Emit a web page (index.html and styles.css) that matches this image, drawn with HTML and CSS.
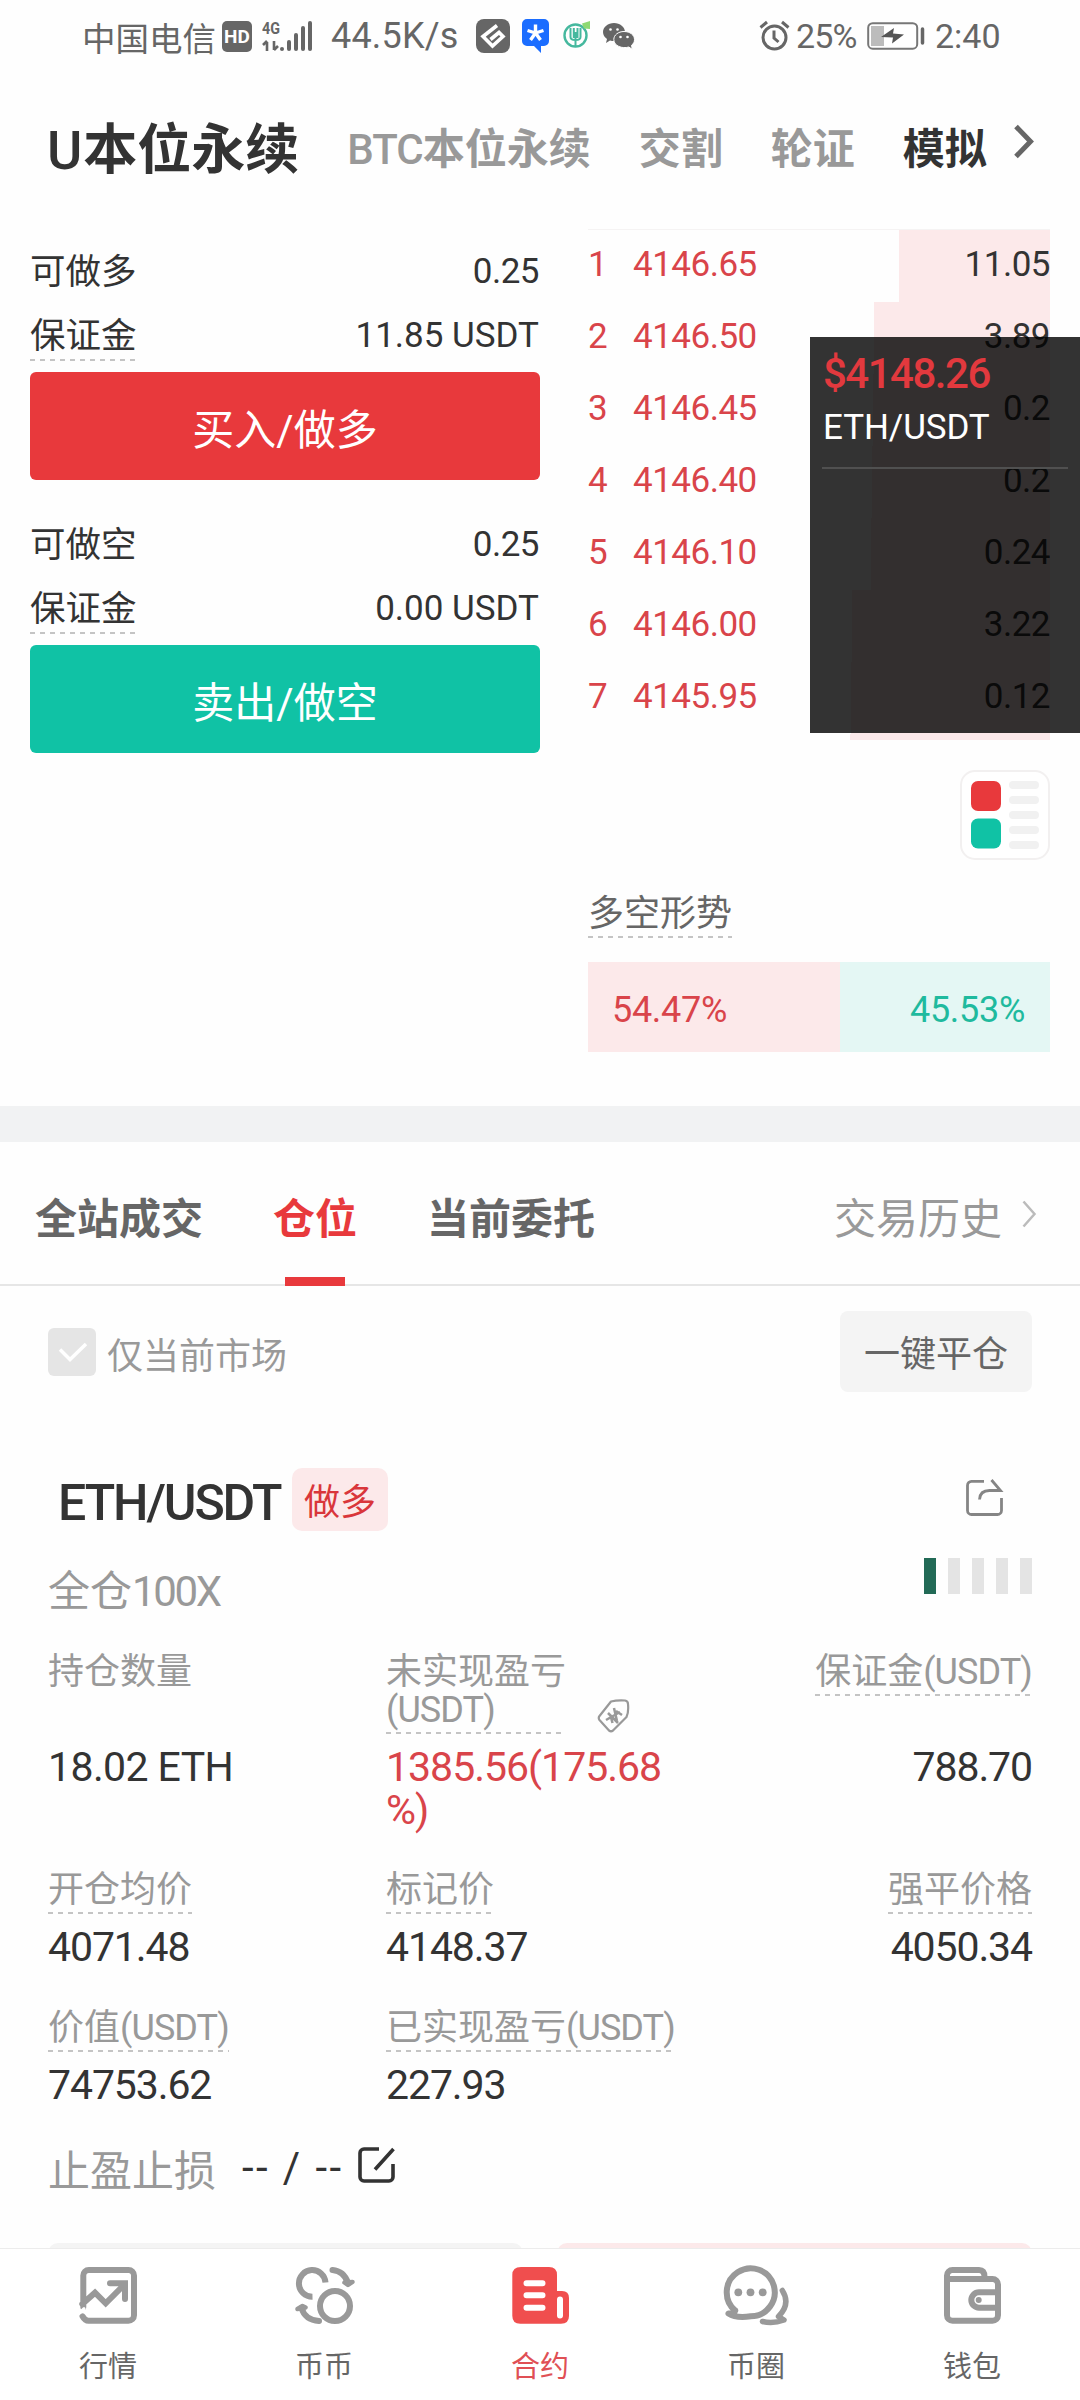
FILE: index.html
```html
<!DOCTYPE html>
<html lang="zh-CN">
<head>
<meta charset="utf-8">
<title>合约</title>
<link rel="stylesheet" href="styles.css">
</head>
<body>
<div class="app">
  <header class="status">
    <span class="carrier">中国电信</span>
    <span class="hd">HD</span>
    <svg class="signal" width="52" height="34" viewBox="0 0 52 34" fill="#666">
      <text x="0" y="15" class="net" textLength="18" lengthAdjust="spacingAndGlyphs">4G</text>
      <path d="M5 32V23M5 22L1 26M12 22v9M12 31l4-4" stroke="#666" stroke-width="2.6" fill="none"/>
      <rect x="18" y="28" width="4" height="4" rx="2"/><rect x="25" y="21" width="4" height="11" rx="2"/>
      <rect x="32" y="14" width="4" height="18" rx="2"/><rect x="39" y="7" width="4" height="25" rx="2"/><rect x="46" y="2" width="4" height="30" rx="2"/>
    </svg>
    <span class="speed">44.5K/s</span>
    <svg class="app-a" width="34" height="34" viewBox="0 0 34 34"><rect width="34" height="34" rx="8" fill="#666"/><path d="M21 6.500L7 17.500 16.500 27 27 17.500 23 13.500 14.500 20.500" fill="none" stroke="#fff" stroke-width="3.600"/></svg>
    <svg class="app-b" width="27" height="34" viewBox="0 0 27 34"><path d="M5 0h17a5 5 0 0 1 5 5v17a5 5 0 0 1-5 5h-3v7l-7-7H5a5 5 0 0 1-5-5V5a5 5 0 0 1 5-5z" fill="#1b6dff"/><path d="M13.500 5.500v8.500M13.500 14L5.500 11.500M13.500 14l8-2.500M13.500 14l-5 7M13.500 14l5 7" stroke="#fff" stroke-width="3.400"/></svg>
    <svg class="app-c" width="28" height="28" viewBox="0 0 28 28" fill="none"><circle cx="12.500" cy="15.500" r="11" stroke="#45b89e" stroke-width="2.400"/><path d="M12.500 12v14M7.500 8v9q0 3 5 3t5-3V8M10.800 8v10M14.500 8v10" stroke="#45b89e" stroke-width="2"/><path d="M19 3.500L27 1v8l-6-.5z" fill="#8ed973"/></svg>
    <svg class="app-d" width="32" height="27" viewBox="0 0 32 27"><path d="M11 0c6 0 11 4 11 9s-5 9-11 9c-1.500 0-2.500 0-4-.6L3 20l1-4C1.500 14.300 0 12 0 9c0-5 5-9 11-9z" fill="#666"/><path d="M21 8.500c6 0 10.500 3.500 10.500 8 0 2.500-1 4.300-3 5.800l.8 4-3.500-2.300c-6.500 2-15-1-15-7.500 0-4.500 4.500-8 10.200-8z" fill="#666" stroke="#fff"/><g fill="#fff"><circle cx="7.500" cy="6.500" r="1.300"/><circle cx="14.500" cy="6.500" r="1.300"/><circle cx="17.500" cy="14" r="1.300"/><circle cx="24.500" cy="14" r="1.300"/></g></svg>
    <svg class="alarm" width="31" height="32" viewBox="0 0 31 32" fill="none" stroke="#666" stroke-width="3"><circle cx="15.500" cy="17.500" r="11.500"/><path d="M1.500 7.500L8 2M29.500 7.500L23 2M15 10.500V18l4.500 4"/></svg>
    <span class="percent">25%</span>
    <svg class="battery" width="58" height="28" viewBox="0 0 58 28"><rect x="1.200" y="1.200" width="49" height="25.500" rx="4.500" fill="#fff" stroke="#777" stroke-width="2"/><rect x="4" y="4" width="13" height="20" fill="#bcbcbc"/><path d="M14 15l13-9-1 5.500 11 1-12 9 1-6z" fill="#555"/><path d="M55.500 7v14" stroke="#666" stroke-width="3.500" stroke-linecap="round"/></svg>
    <span class="clock">2:40</span>
  </header>

  <nav class="markets">
    <span class="market current"><i>U</i>本位永续</span>
    <span class="market"><i>BTC</i>本位永续</span>
    <span class="market">交割</span>
    <span class="market">轮证</span>
    <span class="market dark">模拟</span>
    <svg class="more" width="22" height="36" viewBox="0 0 22 36"><path d="M3 2.500L17.500 17.500 3 32.500" fill="none" stroke="#666" stroke-width="5"/></svg>
  </nav>

  <section class="trade">
    <div class="order">
      <div class="pair"><span>可做多</span><b>0.25</b></div>
      <div class="pair"><span class="dashed">保证金</span><b class="coin">11.85 USDT</b></div>
      <button class="action buy">买入/做多</button>
      <div class="pair second"><span>可做空</span><b>0.25</b></div>
      <div class="pair"><span class="dashed">保证金</span><b class="coin">0.00 USDT</b></div>
      <button class="action sell">卖出/做空</button>
    </div>
    <div class="depth">
      <div class="book">
        <div class="level"><span>1</span><span>4146.65</span><em style="width:151px">11.05</em></div>
        <div class="level"><span>2</span><span>4146.50</span><em style="width:176px">3.89</em></div>
        <div class="level"><span>3</span><span>4146.45</span><em style="width:177px">0.2</em></div>
        <div class="level"><span>4</span><span>4146.40</span><em style="width:178px">0.2</em></div>
        <div class="level"><span>5</span><span>4146.10</span><em style="width:179px">0.24</em></div>
        <div class="level"><span>6</span><span>4146.00</span><em style="width:198px">3.22</em></div>
        <div class="level"><span>7</span><span>4145.95</span><em style="width:199px">0.12</em></div>
        <div class="level"><em style="width:200px"></em></div>
      </div>
      <svg class="toggle" width="90" height="90" viewBox="0 0 90 90"><rect x="1" y="1" width="88" height="88" rx="14" fill="#fff" stroke="#f2f0f0" stroke-width="2"/><rect x="11" y="11" width="30" height="30" rx="7" fill="#e8393c"/><rect x="11" y="48.500" width="30" height="30" rx="7" fill="#10c2a5"/><path d="M53 15h22M53 30h22M53 45h22M53 60h22M53 75h22" stroke="#f1f1f1" stroke-width="8" stroke-linecap="round"/></svg>
      <div class="trend dashed">多空形势</div>
      <div class="ratio"><span class="long" style="width:54.47%">54.47%</span><span class="short">45.53%</span></div>
    </div>
  </section>

  <div class="band"></div>

  <nav class="tabs">
    <span>全站成交</span>
    <span class="active">仓位</span>
    <span>当前委托</span>
    <span class="history">交易历史</span>
    <svg width="15" height="28" viewBox="0 0 15 28"><path d="M1.500 1.500L12.500 14 1.500 26.500" fill="none" stroke="#bbb" stroke-width="2.500"/></svg>
  </nav>

  <section class="positions">
    <div class="filter">
      <svg width="48" height="48" viewBox="0 0 48 48"><rect width="48" height="48" rx="6" fill="#e5e5e5"/><path d="M12 21.500l10 10L38 16" fill="none" stroke="#fff" stroke-width="3.500"/></svg>
      <span>仅当前市场</span>
      <button>一键平仓</button>
    </div>
    <div class="head">
      <h2>ETH/USDT</h2><span class="side">做多</span>
      <svg width="38" height="40" viewBox="0 0 38 40" fill="none" stroke="#858585" stroke-width="2.800"><path d="M18 4.400H5.500a4 4 0 0 0-4 4V33.500a4 4 0 0 0 4 4H31.500a4 4 0 0 0 4-4V21M25.500 3l9 10.500H23.500q-9.500 0-10 9"/></svg>
    </div>
    <div class="leverage"><span>全仓<i>100X</i></span><div class="risk"><i></i><i></i><i></i><i></i><i></i></div></div>

    <div class="stats first">
      <div><label>持仓数量</label><b class="coin">18.02 ETH</b></div>
      <div><label><span class="two dashed">未实现盈亏<br><i>(USDT)</i></span>
        <svg class="tag" width="34" height="36" viewBox="0 0 34 36" fill="none" stroke="#999" stroke-width="2.200" stroke-linejoin="round"><path d="M14 3.500Q20 2 28 2.500 31 3 31 6q.8 8-1.500 13L16 32.500q-2 1.500-4 0L2.500 22q-1.500-2 0-4z"/><path d="M9 22l14-8M11 15l10 10M17 10l3 13M13.500 17.500l2 7.500M19 13l6 4" stroke-width="2.500"/></svg></label><b class="red">1385.56(175.68<br>%)</b></div>
      <div><label><span class="dashed">保证金<i>(USDT)</i></span></label><b>788.70</b></div>
    </div>
    <div class="stats">
      <div><label><span class="dashed">开仓均价</span></label><b>4071.48</b></div>
      <div><label><span class="dashed">标记价</span></label><b>4148.37</b></div>
      <div><label><span class="dashed">强平价格</span></label><b>4050.34</b></div>
    </div>
    <div class="stats">
      <div><label><span class="dashed">价值<i>(USDT)</i></span></label><b>74753.62</b></div>
      <div><label><span class="dashed">已实现盈亏<i>(USDT)</i></span></label><b>227.93</b></div>
    </div>
    <div class="stop"><span>止盈止损</span><b>-- / --</b>
      <svg width="38" height="38" viewBox="0 0 38 38" fill="none" stroke="#333" stroke-width="3.600"><path d="M21 3H6a4 4 0 0 0-4 4V31a4 4 0 0 0 4 4H31a4 4 0 0 0 4-4V18M17 23.500L35.500 3"/></svg>
    </div>
    <div class="peek"><span></span><span></span></div>
  </section>

  <nav class="bottom">
    <a><svg viewBox="0 0 66 66"><path d="M8.300 45V13.500A5.500 5.500 0 0 1 13.800 8H53.500A5.500 5.500 0 0 1 59 13.500V53.300a5.500 5.500 0 0 1-5.500 5.500H13.500q-3.500 0-6-4.500M7.300 42L20 30.700l10.700 10.600L49 23M35 21.300H50V37" stroke-linejoin="miter"/><path d="M4 51.500l5-5" stroke="#fff" stroke-width="3"/></svg>行情</a>
    <a><svg viewBox="0 0 66 66"><path d="M34.500 20.500A13.300 13.300 0 1 0 21.500 34.700" stroke-linecap="butt"/><circle cx="44" cy="44" r="15"/><path d="M41.500 8Q53 9 57 21M28 59Q14 58 10.500 46"/><path d="M53.500 20.500l8-.5-4.500 3zM14.500 45.500L6.500 47l5-3z" stroke-width="4.500"/></svg>币币</a>
    <a class="on"><svg viewBox="0 0 66 66"><path d="M14 5H42q8 0 8 8V29h5q7 0 7 7V54q0 7.700-8 7.700H13.300q-8 0-8-8V13q0-8 8.700-8z" fill="#f04e4e" stroke="none"/><path d="M19.500 21.300h16M19.500 33.300h16M19.500 45.700h16M53 37.500v16" stroke="#fff"/></svg>合约</a>
    <a><svg viewBox="0 0 66 66" overflow="visible"><path d="M12.200 48.600A24 24 0 1 1 27.700 54.300Q13 56.500 5.500 51.500q6.500-.5 6.700-3"/><path d="M59.300 28.500Q68 42 55.500 54.500l5.500 3.500Q50 62 39.500 59.500" stroke-width="5.500"/><g fill="#999" stroke="none"><circle cx="15.300" cy="30.300" r="3.900"/><circle cx="27.500" cy="30.300" r="3.900"/><circle cx="39.700" cy="30.300" r="3.900"/></g></svg>币圈</a>
    <a><svg viewBox="0 0 66 66"><path d="M8 17V53.300a5.500 5.500 0 0 0 5.500 5.500H53.500a5.500 5.500 0 0 0 5.500-5.500V22.500A5.500 5.500 0 0 0 53.500 17H8V13.500A5.500 5.500 0 0 1 13.500 8H40q5.500 0 5.500 7M59 30.300H40a7.700 7.700 0 0 0 0 15.400H59"/><circle cx="39.700" cy="38" r="3" fill="#999" stroke="none"/></svg>钱包</a>
  </nav>

  <aside class="ticker"><strong>$4148.26</strong><span>ETH/USDT</span></aside>
</div>
</body>
</html>
```
FILE: styles.css
```css
* { box-sizing: border-box; }
body { margin: 0; background: #fff; }
i, em { font-style: normal; }
b { font-weight: 400; }
button { border: 0; padding: 0; font: inherit; }

.app {
  position: relative;
  width: 1080px;
  height: 2400px;
  overflow: hidden;
  display: flex;
  flex-direction: column;
  background: #fefefe;
  color: #333;
  font-family: Roboto, "Noto Sans CJK SC", sans-serif;
  font-size: 35px;
}

.dashed {
  background-image: linear-gradient(90deg, #c4c4c4 50%, transparent 50%);
  background-size: 10px 2px;
  background-repeat: repeat-x;
  background-position: 0 100%;
}

/* Status bar */
.status {
  height: 72px;
  padding: 0 0 0 82px;
  display: flex;
  align-items: center;
  color: #666;
  font-size: 33.500px;
  white-space: nowrap;
}
.carrier { width: 140px; }
.hd {
  width: 30px;
  height: 31px;
  border-radius: 5px;
  background: #666;
  color: #fff;
  font-size: 19px;
  font-weight: 700;
  line-height: 31px;
  text-align: center;
}
.signal { margin-left: 10px; }
.net { font-size: 17px; font-weight: 700; }
.speed { margin-left: 17px; width: 145px; font-size: 36px; letter-spacing: .2px; }
.app-b { margin-left: 12px; }
.app-c { margin: -4px 0 0 14px; }
.app-d { margin-left: 12px; }
.alarm { margin-left: 124px; }
.percent { margin-left: 6px; width: 71px; font-size: 34px; letter-spacing: -.8px; }
.clock { margin-left: 10px; font-size: 34px; }

/* Market selector */
.markets {
  height: 146px;
  padding-left: 47px;
  display: flex;
  align-items: center;
  color: #999;
  font-size: 42px;
  font-weight: 700;
  white-space: nowrap;
}
.market { margin-right: 48px; }
.market i { font-weight: 500; letter-spacing: -1px; }
.current { color: #333; font-size: 54px; margin-right: 48px; }
.current i { letter-spacing: 1px; }
.dark { color: #333; margin-right: 26px; }
.more { margin-top: -6px; }

/* Order entry and depth */
.trade {
  height: 888px;
  padding: 4px 30px 0;
  display: flex;
  justify-content: space-between;
}
.order { width: 510px; padding-top: 17px; }
.pair {
  height: 64px;
  display: flex;
  justify-content: space-between;
  line-height: 67px;
  padding-right: 1px;
}
.pair span { font-size: 35.500px; }
.pair .dashed { background-position: 0 56px; }
.pair b { line-height: 65px; letter-spacing: -.5px; }
.pair .coin { letter-spacing: 0; }
.second { margin-top: 32px; }
.action {
  display: block;
  width: 100%;
  height: 108px;
  margin-top: 5px;
  border-radius: 6px;
  color: #fff;
  font-size: 42px;
  line-height: 117px;
}
.buy { background: #e8393c; }
.sell { background: #10c2a5; }

.depth { width: 462px; padding-top: 7px; display: flex; flex-direction: column; }
.book { height: 511px; border-top: 1px solid #f5f3f3; overflow: hidden; flex: none; }
.level {
  height: 72px;
  display: flex;
  color: #d9444a;
  line-height: 69px;
  letter-spacing: -.5px;
}
.level span:first-child { width: 45px; }
.level em { margin-left: auto; background: #fce9ea; color: #333; text-align: right; }
.toggle { margin: 30px 0 0 auto; display: block; flex: none; }
.trend {
  align-self: flex-start;
  margin-top: 28px;
  height: 50px;
  color: #666;
  font-size: 36px;
  line-height: 52px;
}
.ratio {
  height: 90px;
  margin-top: 24px;
  display: flex;
  font-size: 36px;
  line-height: 96px;
  letter-spacing: -.3px;
}
.long { padding-left: 24px; background: #fce9ea; color: #d9444a; }
.short { flex: 1; padding-right: 25px; background: #e4f7f4; color: #1fba9e; text-align: right; }

.band { height: 36px; background: #f1f2f3; }

/* Record tabs */
.tabs {
  height: 144px;
  padding-left: 35px;
  border-bottom: 2px solid #e6e6e6;
  display: flex;
  align-items: flex-start;
  color: #666;
  font-size: 42px;
  font-weight: 700;
  line-height: 144px;
}
.tabs span { margin-right: 70px; padding-top: 6px; height: 144px; }
.tabs .active { position: relative; color: #e8393c; }
.active::after {
  content: "";
  position: absolute;
  left: 12px;
  bottom: 0;
  width: 60px;
  height: 9px;
  background: #e8393c;
}
.tabs .history { margin: 0 20px 0 auto; color: #999; font-weight: 400; }
.tabs svg { margin: 58px 43px 0 0; }

/* Position card */
.positions { height: 962px; padding: 25px 48px 0; position: relative; }
.filter {
  height: 81px;
  display: flex;
  align-items: center;
  color: #999;
  font-size: 36px;
}
.filter span { margin-left: 11px; padding-top: 2px; }
.filter button {
  width: 192px;
  height: 81px;
  margin-left: auto;
  border-radius: 8px;
  background: #f4f4f4;
  color: #666;
  line-height: 89px;
}
.head { height: 63px; margin-top: 76px; display: flex; align-items: center; }
.head h2 { margin: 0; width: 244px; padding-left: 10px; font-size: 50px; font-weight: 500; letter-spacing: -2.100px; padding-top: 6px; }
.side { width: 96px; height: 63px; border-radius: 10px; background: #fce9ea; color: #d9363b; font-size: 36px; line-height: 70px; text-align: center; }
.head svg { margin: -5px 28px 0 auto; }
.leverage { height: 121px; display: flex; justify-content: space-between; color: #999; }
.leverage span { margin-top: 37px; font-size: 42px; line-height: 48px; }
.leverage span i { letter-spacing: -2.400px; }
.risk { display: flex; gap: 12px; margin-top: 27px; }
.risk i { width: 12px; height: 36px; background: #e4e4e4; }
.risk i:first-child { background: #226a56; }

.stats { height: 138px; display: grid; grid-template-columns: 338px 400px 1fr; }
.stats > div:last-child:nth-child(3) { text-align: right; }
.stats label { display: flex; height: 56px; color: #999; font-size: 36px; line-height: 40px; }
.stats > div:nth-child(3) label { justify-content: flex-end; }
.stats label .dashed { height: 44px; white-space: nowrap; }
.stats label i { letter-spacing: -.900px; }
.stats b { display: block; font-size: 41px; line-height: 43px; letter-spacing: -1.100px; }
.stats .coin { letter-spacing: -.600px; }
.stats.first { height: 218px; }
.first label { height: 94px; }
.first label .two { height: 82px; width: 178px; line-height: 38px; padding-top: 1px; }
.tag { margin: 46px 0 0 33px; }
.first .red { color: #d9444a; letter-spacing: -1px; }

.stop { height: 60px; margin-top: -9px; display: flex; align-items: center; font-size: 42px; color: #999; }
.stop b { margin-left: 26px; width: 116px; color: #333; white-space: pre; letter-spacing: 2.400px; }
.stop svg { margin-top: -4px; }
.peek { display: flex; gap: 34px; margin-top: 46px; }
.peek span { flex: 1; height: 20px; border-radius: 10px; background: #f4f4f4; }
.peek span + span { background: #fce9ea; }

/* Bottom navigation */
.bottom {
  position: relative;
  height: 152px;
  padding-top: 13px;
  border-top: 1px solid #ececec;
  background: #fff;
  display: flex;
}
.bottom a {
  flex: 1;
  display: flex;
  flex-direction: column;
  align-items: center;
  color: #666;
  font-size: 29px;
  line-height: 44px;
}
.bottom svg {
  width: 66px;
  height: 66px;
  margin-bottom: 17px;
  fill: none;
  stroke: #999;
  stroke-width: 6;
  stroke-linecap: round;
  stroke-linejoin: round;
}
.bottom .on { color: #e05055; }

/* Floating price ticker */
.ticker {
  position: absolute;
  top: 337px;
  right: 0;
  width: 270px;
  height: 396px;
  padding: 10px 12px;
  background: rgba(0, 0, 0, .8);
  color: #fff;
}
.ticker strong { display: block; padding-left: 1px; color: #e2393e; font-size: 42px; font-weight: 500; line-height: 53px; letter-spacing: -1.500px; }
.ticker span { display: block; height: 69px; padding-left: 1px; border-bottom: 2px solid #505050; line-height: 55px; letter-spacing: -.1px; }
```
